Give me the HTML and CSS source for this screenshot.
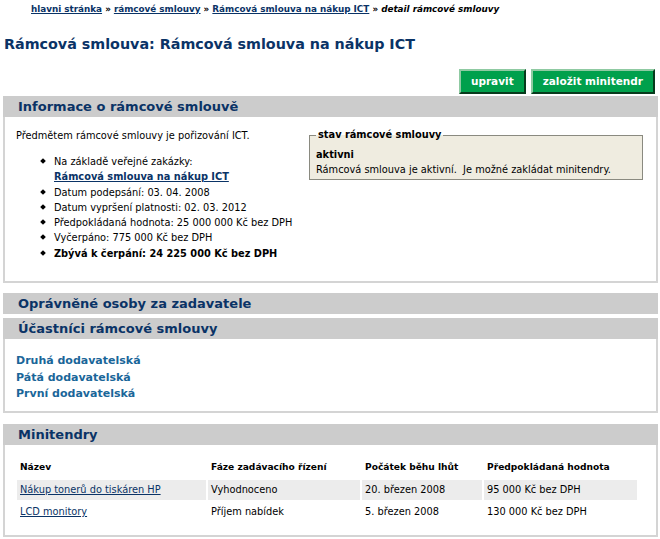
FILE: index.html
```html
<!DOCTYPE html>
<html lang="cs">

<head>
  <meta charset="UTF-8">
  <title>detail rámcové smlouvy</title>
  <link rel="stylesheet" href="styles.css">
</head>

<body>
  <div class="crumbs">
    <a href="#">hlavni stránka</a> &raquo; <a href="#">rámcové smlouvy</a> &raquo;
    <a href="#">Rámcová smlouva na nákup ICT</a> &raquo; <em>detail rámcové smlouvy</em>
  </div>
  <h1 class="title">Rámcová smlouva: Rámcová smlouva na nákup ICT</h1>
  <div class="actions">
    <a href="#" class="btn">upravit</a>
    <a href="#" class="btn">založit minitendr</a>
  </div>

  <div class="box">
    <h2 class="box-hd">Informace o rámcové smlouvě</h2>
    <div class="box-bd info">
      <div class="info-main">
        <p>Předmětem rámcové smlouvy je pořizování ICT.</p>
        <ul class="facts">
          <li>Na základě veřejné zakázky:<br><a href="#">Rámcová smlouva na nákup ICT</a></li>
          <li>Datum podepsání: 03. 04. 2008</li>
          <li>Datum vypršení platnosti: 02. 03. 2012</li>
          <li>Předpokládaná hodnota: 25 000 000 Kč bez DPH</li>
          <li>Vyčerpáno: 775 000 Kč bez DPH</li>
          <li class="strong">Zbývá k čerpání: 24 225 000 Kč bez DPH</li>
        </ul>
      </div>
      <fieldset class="state">
        <legend>stav rámcové smlouvy</legend>
        <strong>aktivni</strong><br>
        Rámcová smlouva je aktivní.&nbsp; Je možné zakládat minitendry.
      </fieldset>
    </div>
  </div>

  <div class="box box-empty">
    <h2 class="box-hd">Oprávněné osoby za zadavatele</h2>
  </div>

  <div class="box box-tight">
    <h2 class="box-hd">Účastníci rámcové smlouvy</h2>
    <div class="box-bd parts">
      <a href="#">Druhá dodavatelská</a>
      <a href="#">Pátá dodavatelská</a>
      <a href="#">První dodavatelská</a>
    </div>
  </div>

  <div class="box">
    <h2 class="box-hd">Minitendry</h2>
    <div class="box-bd tenders">
      <table class="grid">
        <tr>
          <th class="c1">Název</th>
          <th class="c2">Fáze zadávacího řízení</th>
          <th class="c3">Počátek běhu lhůt</th>
          <th class="c4">Předpokládaná hodnota</th>
        </tr>
        <tr class="odd">
          <td><a href="#">Nákup tonerů do tiskáren HP</a></td>
          <td>Vyhodnoceno</td>
          <td>20. březen 2008</td>
          <td>95 000 Kč bez DPH</td>
        </tr>
        <tr>
          <td><a href="#">LCD monitory</a></td>
          <td>Příjem nabídek</td>
          <td>5. březen 2008</td>
          <td>130 000 Kč bez DPH</td>
        </tr>
      </table>
    </div>
  </div>
</body>

</html>
```

FILE: styles.css
```css
* {
  margin: 0;
  padding: 0;
}

body {
  padding: 2px 2px 0 3px;
  font-family: "DejaVu Sans", sans-serif;
  font-size: 9.8px;
  color: #000;
  background: #fff;
}

a {
  color: #0a3366;
}

ul {
  list-style: none;
}

.crumbs {
  padding-left: 28px;
  font-size: 8.8px;
  font-weight: bold;
  line-height: 14px;
}

.crumbs em {
  font-style: italic;
}

.title {
  margin-top: 18px;
  padding-left: 1px;
  font-size: 14.3px;
  line-height: 20px;
  color: #0a3366;
}

.actions {
  display: flex;
  justify-content: flex-end;
  gap: 5px;
  margin-top: 15px;
  padding-right: 3px;
}

.btn {
  display: block;
  height: 25px;
  padding: 0 10px;
  line-height: 21px;
  font-size: 10.5px;
  font-weight: bold;
  color: #fff;
  text-decoration: none;
  background-color: #00a04c;
  border: 2px solid;
  border-color: #8fcaa2 #073a1c #073a1c #8fcaa2;
  box-sizing: border-box;
}

.box {
  margin-top: 2px;
  border: 2px solid #d4d4d4;
  border-top: none;
}

.box + .box {
  margin-top: 10px;
}

.box-empty {
  border: none;
}

.box-empty .box-hd {
  margin: 0;
}

.box + .box-tight {
  margin-top: 4px;
}

.box-tight + .box {
  margin-top: 11px;
}

.box-hd {
  height: 21px;
  padding-left: 15px;
  line-height: 21px;
  font-size: 13px;
  color: #0a3366;
  background-color: #cccccc;
  margin: 0 -2px;
}

.box-bd {
  padding: 11px 11px 14px 11px;
}

.info {
  display: flex;
  justify-content: space-between;
  align-items: flex-start;
  min-height: 164px;
  padding-right: 13px;
  box-sizing: border-box;
}

.info p {
  line-height: 16px;
}

.facts {
  margin-top: 10px;
  padding-left: 24px;
}

.facts li {
  position: relative;
  padding-left: 14px;
  line-height: 15.3px;
}

.facts li:before {
  content: '';
  position: absolute;
  left: 1px;
  top: 5px;
  width: 4px;
  height: 4px;
  background: #000;
  transform: rotate(45deg);
}

.facts a {
  font-weight: bold;
}

.facts .strong {
  font-weight: bold;
}

.state {
  width: 334px;
  padding: 5px 6px 2px 6px;
  line-height: 15px;
  background-color: #efece0;
  border: 1px solid #8a8a80;
  box-sizing: border-box;
}

.state legend {
  padding: 0 2px;
  line-height: 14px;
  font-weight: bold;
}

.parts {
  display: flex;
  flex-direction: column;
  padding-top: 14px;
  padding-bottom: 8px;
}

.parts a {
  line-height: 16.7px;
  font-size: 11px;
  font-weight: bold;
  text-decoration: none;
  color: #1a6699;
}

.tenders {
  padding: 9px 10px 11px 10px;
}

.grid {
  table-layout: fixed;
  width: 624px;
  border-collapse: separate;
  border-spacing: 2px;
}

.grid th {
  height: 22px;
  padding: 0 3px;
  text-align: left;
  font-size: 9.1px;
  font-weight: bold;
  line-height: 14px;
}

.grid td {
  height: 20px;
  padding: 0 3px;
  line-height: 20px;
}

.grid .odd td {
  background-color: #ececec;
}

.c1 {
  width: 183px;
}

.c2 {
  width: 146px;
}

.c3 {
  width: 114px;
}

.c4 {
  width: 147px;
}
```
